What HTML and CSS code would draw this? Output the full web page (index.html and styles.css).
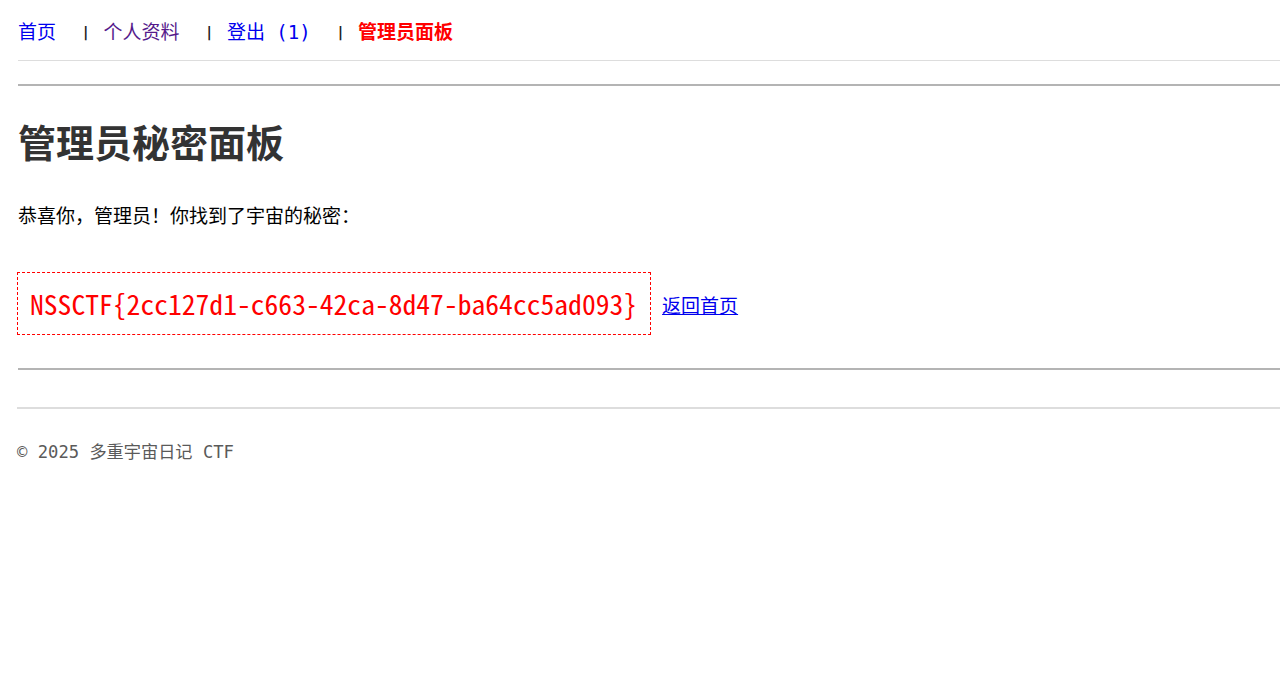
FILE: index.html
```html
<!DOCTYPE html>
<html lang="zh-CN">
<head>
<meta charset="utf-8">
<title>管理员面板</title>
<link rel="stylesheet" href="styles.css">
</head>
<body>
<div class="page">
  <nav class="nav">
    <a href="#" class="nav-link">首页</a>
    <span class="sep">|</span>
    <a href="#" class="nav-link visited">个人资料</a>
    <span class="sep">|</span>
    <a href="#" class="nav-link">登出 (1)</a>
    <span class="sep">|</span>
    <a href="#" class="nav-link admin">管理员面板</a>
  </nav>
  <hr class="rule">
  <main class="main">
    <h1 class="title">管理员秘密面板</h1>
    <p class="msg">恭喜你，管理员！你找到了宇宙的秘密：</p>
    <div class="flag-row">
      <div class="flag">NSSCTF{2cc127d1-c663-42ca-8d47-ba64cc5ad093}</div>
      <a href="#" class="back">返回首页</a>
    </div>
  </main>
  <hr class="rule rule-bottom">
  <footer class="footer">© 2025 多重宇宙日记 CTF</footer>
</div>
</body>
</html>
```
FILE: styles.css
```css
html, body {
  margin: 0;
  padding: 0;
  background: #fff;
}
body {
  font-family: "DejaVu Sans Mono", "Noto Sans CJK SC", monospace;
  font-size: 19px;
  color: #111;
}
.page {
  padding-left: 18px;
}
.nav {
  display: flex;
  align-items: center;
  line-height: 28px;
  padding: 18px 0 14px;
  border-bottom: 1px solid #ddd;
}
.nav-link {
  color: #0000ee;
  text-decoration: none;
  white-space: pre;
}
.nav-link.visited {
  color: #551a8b;
}
.nav-link.admin {
  color: #ff0000;
  font-weight: bold;
}
.sep {
  color: #222;
  font-family: "DejaVu Sans Mono", monospace;
  font-weight: bold;
  font-size: 14px;
  line-height: 28px;
  margin: 0 13.5px 0 25.5px;
}
.rule {
  margin: 23px 0 0;
  border: 0;
  height: 2px;
  background: #b4b4b4;
}
.main {
  padding-top: 35px;
}
.title {
  margin: 0;
  font-size: 38px;
  line-height: 46px;
  color: #333;
  font-weight: bold;
}
.msg {
  margin: 35px 0 0;
  line-height: 28px;
  color: #000;
}
.flag-row {
  margin-top: 42px;
  display: flex;
  align-items: center;
  gap: 11px;
  margin-left: -1px;
}
.flag {
  border: 1px dashed #ff0000;
  padding: 15px 13px 16px 12px;
  color: #ff0000;
  font-family: "Noto Sans Mono CJK SC", "DejaVu Sans Mono", monospace;
  font-weight: normal;
  font-size: 27.6px;
  line-height: 30px;
}
.back {
  color: #0000ee;
  text-decoration: underline;
  margin-top: 2px;
}
.rule-bottom {
  margin-top: 33px;
}
.footer {
  margin-top: 37px;
  border-top: 2px solid #ddd;
  padding-top: 30px;
  line-height: 26px;
  font-size: 17.2px;
  color: #5a5a5a;
  margin-left: -1px;
}
```
